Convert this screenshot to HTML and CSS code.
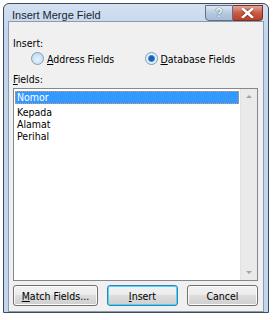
FILE: index.html
```html
<!DOCTYPE html>
<html lang="en">
<head>
  <meta charset="UTF-8">
  <title>Insert Merge Field</title>
  <link rel="stylesheet" href="styles.css">
</head>
<body>
  <div class="window">
    <div class="titlebar">
      <span class="title">Insert Merge Field</span>
      <div class="caption-btns">
        <div class="cbtn help">?</div>
        <div class="cbtn close">
          <svg width="13" height="10" viewBox="0 0 13 10"><path d="M2 1 L11 9 M11 1 L2 9" stroke="#fff" stroke-width="2.6" stroke-linecap="square"/></svg>
        </div>
      </div>
    </div>
    <div class="client">
      <div class="label">Insert:</div>
      <div class="radios">
        <label class="radio"><span class="dot"></span><span><u>A</u>ddress Fields</span></label>
        <label class="radio"><span class="dot on"></span><span><u>D</u>atabase Fields</span></label>
      </div>
      <div class="label"><u>F</u>ields:</div>
      <div class="listbox">
        <div class="items">
          <div class="item sel">Nomor</div>
          <div class="item">Kepada</div>
          <div class="item">Alamat</div>
          <div class="item">Perihal</div>
        </div>
        <div class="scrollbar">
          <span class="arrow up"></span>
          <span class="arrow down"></span>
        </div>
      </div>
      <div class="buttons">
        <div class="btn"><u>M</u>atch Fields...</div>
        <div class="btn default"><u>I</u>nsert</div>
        <div class="btn">Cancel</div>
      </div>
    </div>
  </div>
</body>
</html>
```
FILE: styles.css
```css
* { box-sizing: border-box; margin: 0; padding: 0; }
body {
  background: #fff;
  font-family: "DejaVu Sans Condensed", "DejaVu Sans", sans-serif;
  font-size: 10.5px;
  color: #000;
}
.window {
  margin: 3px 0 0 3px;
  width: 266px;
  height: 310px;
  border: 1px solid #3b4a5c;
  border-radius: 6px 6px 0 0;
  background: linear-gradient(#d3e1f1, #c2d5eb 30px, #c4d6ec);
  padding: 0 4px 4px 4px;
  display: flex;
  flex-direction: column;
}
.titlebar {
  height: 23px;
  display: flex;
  align-items: flex-start;
  justify-content: space-between;
}
.title {
  font-family: "Liberation Sans", sans-serif;
  font-size: 11px;
  padding: 5px 0 0 4px;
  color: #1b2430;
}
.caption-btns {
  display: flex;
  margin-top: 1px;
  margin-right: 1px;
}
.cbtn {
  height: 16px;
  border: 1px solid #5e6f86;
  display: flex;
  align-items: center;
  justify-content: center;
}
.help {
  width: 28px;
  border-radius: 0 0 0 4px;
  background: linear-gradient(#dfe8f3, #b6c9e0 50%, #a6bcd8);
  color: #f4f8fc;
  font-family: "Liberation Sans", sans-serif;
  font-weight: bold;
  font-size: 12px;
  text-shadow: 0 0 1px #49617f, 0 0 1px #49617f;
}
.close {
  width: 30px;
  border-left: none;
  border-radius: 0 0 4px 0;
  background: linear-gradient(#e4a697, #c95b44 50%, #b8402a);
  border-color: #7a2e22;
}
.close svg path { filter: drop-shadow(0 0 1px #6a1a10); }
.client {
  flex: 1;
  background: #f0f0f0;
  border: 1px solid #8b9cb2;
  padding: 15px 5px 5px 4px;
  display: flex;
  flex-direction: column;
}
.label { line-height: 13px; }
.radios {
  display: flex;
  margin: 1px 0 7px 18px;
  height: 15px;
}
.radio {
  display: flex;
  align-items: center;
  gap: 3px;
  width: 120px;
}
.dot {
  width: 13px;
  height: 13px;
  border-radius: 50%;
  border: 1px solid #7f9db9;
  background: radial-gradient(circle at 50% 60%, #e8f4fc, #b7d2ea);
  display: inline-block;
}
.dot.on {
  background: radial-gradient(circle, #1d5fa8 0 2px, #3b8dd8 3px, #e8f2fb 4px, #d2e4f4);
}
.listbox {
  margin-top: 2px;
  height: 193px;
  border: 1px solid #828790;
  background: #fff;
  display: flex;
}
.items {
  flex: 1;
  padding: 2px 1px;
}
.item {
  height: 12px;
  line-height: 12px;
  padding-left: 2px;
}
.item.sel {
  background: #3399ff;
  color: #fff;
  outline: 1px dotted #d99a6c;
  outline-offset: -1px;
  height: 13px;
  margin-bottom: 2px;
}
.scrollbar {
  width: 17px;
  background: #eaeaea;
  border-left: 1px solid #e3e3e3;
  display: flex;
  flex-direction: column;
  justify-content: space-between;
  align-items: center;
  padding: 6px 0;
}
.arrow {
  width: 0;
  height: 0;
  border-left: 3px solid transparent;
  border-right: 3px solid transparent;
}
.arrow.up { border-bottom: 3px solid #a3a3a3; }
.arrow.down { border-top: 3px solid #a3a3a3; }
.buttons {
  display: flex;
  gap: 9px;
  margin-top: 4px;
}
.btn {
  width: 72px;
  height: 21px;
  border: 1px solid #707070;
  border-radius: 3px;
  background: linear-gradient(#f2f2f2, #ebebeb 50%, #dddddd 50%, #cfcfcf);
  display: flex;
  align-items: center;
  justify-content: center;
  box-shadow: inset 0 0 0 1px #fbfbfb;
}
.btn:first-child { width: 86px; }
.btn.default {
  border-color: #3c7fb1;
  box-shadow: inset 0 0 0 1px #48d8f8;
}
```
